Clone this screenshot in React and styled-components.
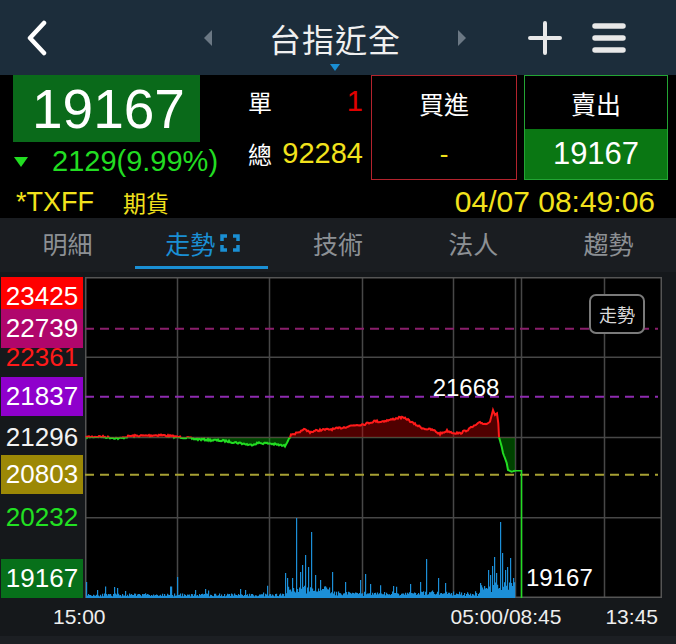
import React from 'react';
import styled, { createGlobalStyle } from 'styled-components';

const GlobalStyle = createGlobalStyle`
  html, body {
    margin: 0;
    padding: 0;
    background: #000;
  }
  body {
    font-family: 'Liberation Sans', 'Noto Sans CJK TC', sans-serif;
  }
`;

const yellow = '#f2e21c';
const green = '#22dd22';
const blue = '#1a8fd4';

const Screen = styled.div`
  width: 676px;
  height: 644px;
  overflow: hidden;
  display: flex;
  flex-direction: column;
  background: #000;
  color: #fff;
`;

/* ---------- header ---------- */

const Header = styled.header`
  position: relative;
  flex: none;
  height: 75px;
  background: #1c2d3b;
  display: grid;
  grid-template-columns: 1fr auto 1fr;
  align-items: center;
`;

const IconButton = styled.button`
  display: flex;
  align-items: center;
  justify-content: center;
  padding: 0;
  border: none;
  background: none;
  cursor: pointer;
`;

const BackButton = styled(IconButton)`
  justify-self: start;
  margin-left: 24px;
`;

const TitleGroup = styled.div`
  display: flex;
  align-items: center;
  gap: 56px;
  margin-right: 6px;
`;

const Title = styled.h1`
  margin: 0;
  font-size: 32px;
  font-weight: 400;
  color: #f0f0f0;
  letter-spacing: 1px;
`;

const HeaderActions = styled.div`
  justify-self: end;
  display: flex;
  align-items: center;
  gap: 30px;
  margin-right: 50px;
`;

const Indicator = styled.span`
  position: absolute;
  left: 330px;
  bottom: 4px;
  border-left: 5px solid transparent;
  border-right: 5px solid transparent;
  border-top: 7px solid ${blue};
`;

/* ---------- quote ---------- */

const Quote = styled.section`
  flex: none;
  height: 143px;
  display: grid;
  grid-template-columns: 187px 171px 146px 151px;
  grid-template-rows: 105px 38px;
  padding: 0 0 0 13px;
  background: #000;
`;

const PriceCol = styled.div`
  display: flex;
  flex-direction: column;
`;

const LastPrice = styled.div`
  height: 67px;
  background: #0a6a1a;
  display: flex;
  align-items: center;
  justify-content: center;
  font-size: 55px;
  color: #fff;
  padding-left: 4px;
`;

const Change = styled.div`
  flex: 1;
  display: flex;
  align-items: center;
  gap: 24px;
  padding-left: 1px;
  font-size: 29px;
  color: ${green};
`;

const DownArrow = styled.span`
  border-left: 7px solid transparent;
  border-right: 7px solid transparent;
  border-top: 10px solid ${green};
  margin-top: 2px;
`;

const InfoCol = styled.div`
  display: grid;
  grid-template-rows: 1fr 1fr;
  padding: 0 8px 0 48px;
`;

const InfoRow = styled.div`
  display: flex;
  align-items: center;
  justify-content: space-between;
`;

const InfoLabel = styled.span`
  font-size: 24px;
  color: #fff;
`;

const InfoValue = styled.span`
  font-size: 29px;
  color: ${(p) => p.$color};
`;

const OrderBox = styled.div`
  display: grid;
  grid-template-rows: 53px 1fr;
  border: 1.5px solid ${(p) => p.$border};
  margin-left: ${(p) => p.$offset || 0}px;
`;

const OrderHead = styled.div`
  display: flex;
  align-items: center;
  justify-content: center;
  font-size: 25px;
  color: #fff;
`;

const OrderValue = styled.div`
  display: flex;
  align-items: center;
  justify-content: center;
  font-size: ${(p) => (p.$dash ? 26 : 31)}px;
  color: ${(p) => (p.$dash ? yellow : '#fff')};
  background: ${(p) => p.$bg || 'transparent'};
`;

const Symbol = styled.div`
  grid-column: 1 / 3;
  display: flex;
  align-items: center;
  gap: 29px;
  padding: 6px 0 0 3px;
  color: ${yellow};
`;

const Code = styled.span`
  font-size: 27px;
`;

const Kind = styled.span`
  font-size: 23px;
`;

const Stamp = styled.div`
  grid-column: 3 / 5;
  display: flex;
  align-items: center;
  justify-content: flex-end;
  padding: 6px 13px 0 0;
  font-size: 30px;
  color: ${yellow};
`;

/* ---------- tabs ---------- */

const Tabs = styled.nav`
  flex: none;
  height: 54px;
  display: grid;
  grid-template-columns: repeat(5, 1fr);
  background: #1a1d21;
`;

const Tab = styled.div`
  position: relative;
  display: flex;
  align-items: center;
  justify-content: center;
  gap: 5px;
  padding-bottom: 4px;
  font-size: 25px;
  color: ${(p) => (p.$active ? blue : '#8c9094')};

  &::after {
    content: '';
    display: ${(p) => (p.$active ? 'block' : 'none')};
    position: absolute;
    left: 0;
    right: 2px;
    bottom: 3px;
    height: 3px;
    background: ${blue};
  }
`;

/* ---------- chart ---------- */

const ChartSection = styled.section`
  flex: 1;
  display: grid;
  grid-template-columns: 85px 577px;
  grid-template-rows: 321px 1fr;
  padding-top: 5px;
  background: #15181b;
`;

const Axis = styled.div`
  position: relative;
`;

const Level = styled.div`
  position: absolute;
  left: 1px;
  width: 82px;
  height: 39px;
  display: flex;
  align-items: center;
  justify-content: center;
  font-size: 26px;
  color: ${(p) => p.$color};
  background: ${(p) => p.$bg || 'transparent'};
`;

const Plot = styled.div`
  position: relative;
  background: #000;
`;

const ModeButton = styled.button`
  position: absolute;
  left: 504px;
  top: 17px;
  width: 56px;
  height: 40px;
  padding: 0;
  border: 2px solid #7a7a7a;
  border-radius: 7px;
  background: #000;
  color: #d8d8d8;
  font-family: 'Noto Sans CJK TC', sans-serif;
  font-size: 18px;
`;

const TimeAxis = styled.div`
  grid-column: 1 / 3;
  display: flex;
  align-items: center;
  height: 38px;
  padding-left: 53px;
  font-size: 21px;
  color: #eeeeee;
  border-bottom: 8px solid #1c1f23;
  margin-right: -14px;
  padding-right: 18px;
`;

const TimeLabel = styled.span`
  margin-left: ${(p) => (p.$auto ? 'auto' : `${p.$gap || 0}px`)};
`;

/* ---------- chart data ---------- */

const W = 577;
const H = 321;
const X0 = 85;
const Y0 = 277;
const TOP = 23425;
const RANGE = 4258;
const py = (p) => ((TOP - p) / RANGE) * H;
const BASE = py(21296);

const LEVELS = [
  { p: 23425, bg: '#ff0000', color: '#fff' },
  { p: 22361, color: '#ff1a1a' },
  { p: 22739, bg: '#b0066c', color: '#fff' },
  { p: 21837, bg: '#8f00cc', color: '#fff' },
  { p: 21296, color: '#f2f2f2' },
  { p: 20803, bg: '#9c8806', color: '#fff' },
  { p: 20232, color: '#22e022' },
  { p: 19167, bg: '#07701a', color: '#fff' },
];

const KEYS = [
  [86, 437], [100, 436.5], [110, 437.5], [120, 438.5], [130, 436], [150, 435.5],
  [160, 435], [170, 436], [177, 437], [185, 437.5], [195, 439], [210, 440],
  [225, 441], [240, 443], [250, 445], [258, 443], [270, 443.5], [285, 446],
  [289, 438], [292, 434], [300, 433], [303, 429], [310, 432], [320, 430],
  [335, 429], [345, 427], [355, 425], [365, 424], [375, 421], [380, 421.7],
  [390, 420], [400, 417.3], [407, 419], [413, 423.3], [423, 428.3], [433, 430],
  [440, 434], [447, 430.7], [453, 432.7], [460, 433.3], [467, 430], [473, 426.7],
  [480, 422.7], [487, 424], [490, 421.7], [493, 410], [495, 415], [497, 413.3],
  [498.3, 423.3], [499, 437], [501.7, 446.7], [503, 453], [506.7, 463],
  [508, 470], [511.7, 471.7], [515, 470.7],
];

const SPIKES = {
  86: 16, 97: 8, 117: 10, 125: 7, 177: 21, 195: 8, 240: 9, 245: 8,
  285: 25, 287: 20, 292: 20, 296: 80, 300: 26, 302: 33, 305: 43, 308: 31,
  311: 66, 315: 23, 320: 18, 332: 26, 345: 16, 360: 18, 365: 24, 370: 14,
  393: 12, 410: 14, 420: 16, 426: 39, 438: 20, 445: 15, 480: 15, 488: 28,
  490: 23, 492: 32, 494: 41, 496: 25, 500: 76, 502: 45, 505: 28, 507: 31,
  510: 40, 513: 20,
};

function rng(seed) {
  let s = seed;
  return () => {
    s = (s * 16807) % 2147483647;
    return (s - 1) / 2147483646;
  };
}

function buildLine() {
  const r = rng(7);
  const pts = [];
  for (let i = 0; i < KEYS.length - 1; i++) {
    const [x1, y1] = KEYS[i];
    const [x2, y2] = KEYS[i + 1];
    const steps = Math.max(1, Math.round(x2 - x1));
    for (let s = 0; s < steps; s++) {
      const t = s / steps;
      const x = x1 + (x2 - x1) * t;
      const y = y1 + (y2 - y1) * t;
      const n = x < 488 ? (r() - 0.5) * 2 : 0;
      pts.push([x - X0, y - Y0 + n]);
    }
  }
  const last = KEYS[KEYS.length - 1];
  pts.push([last[0] - X0, last[1] - Y0]);
  return pts;
}

function buildVolume() {
  const r = rng(11);
  let d = '';
  for (let x = 86; x <= 514; x++) {
    let h = 1.5 + r() * 3;
    if (x >= 285 && x <= 330) h += 2 + r() * 7;
    else if (x >= 480 && x <= 514) h += 3 + r() * 11;
    else if (x > 330 && x < 480) h += r() * 3;
    if (r() < 0.04) h += 3 + r() * 6;
    if (SPIKES[x]) h = SPIKES[x];
    d += `M${x - X0},${H}h1.2v${(-h).toFixed(1)}h-1.2z`;
  }
  return d;
}

const linePts = buildLine();
const lineD = 'M' + linePts.map(([x, y]) => `${x.toFixed(1)},${y.toFixed(1)}`).join('L');
const areaD = `${lineD}L${linePts[linePts.length - 1][0]},${BASE}L${linePts[0][0]},${BASE}Z`;
const volumeD = buildVolume();

const V_LINES = [92, 184, 277, 368, 430, 436, 519];
const H_LINES = [py(22361), BASE, py(20232)];
const DASHES = [
  { y: py(22739), c: '#8a1f6c' },
  { y: py(21837), c: '#8e2bb0' },
  { y: py(20803), c: '#a6a033' },
];

function Chart() {
  const endX = 515 - X0;
  const endY = 470.7 - Y0;
  return (
    <svg width={W} height={H} style={{ display: 'block' }}>
      <defs>
        <clipPath id="above">
          <rect x="0" y="0" width={W} height={BASE} />
        </clipPath>
        <clipPath id="below">
          <rect x="0" y={BASE} width={W} height={H - BASE} />
        </clipPath>
      </defs>
      {V_LINES.map((x) => (
        <line key={x} x1={x + 0.5} y1="0" x2={x + 0.5} y2={H} stroke="#474747" strokeWidth="1.5" />
      ))}
      {H_LINES.map((y) => (
        <line key={y} x1="0" y1={y} x2={W} y2={y} stroke="#474747" strokeWidth="1.5" />
      ))}
      <rect x="0.75" y="0.75" width={W - 1.5} height={H - 1.5} fill="none" stroke="#555" strokeWidth="1.5" />
      {DASHES.map((l) => (
        <line key={l.y} x1="0" y1={l.y} x2={W - 4} y2={l.y} stroke={l.c} strokeWidth="2" strokeDasharray="9 6" />
      ))}
      <path d={volumeD} fill="#1c8fd8" />
      <path d={areaD} fill="rgba(200,0,0,0.4)" clipPath="url(#above)" />
      <path d={areaD} fill="rgba(0,190,0,0.35)" clipPath="url(#below)" />
      <path d={lineD} fill="none" stroke="#ff1a1a" strokeWidth="2" clipPath="url(#above)" />
      <path d={lineD} fill="none" stroke={green} strokeWidth="2" clipPath="url(#below)" />
      <path d={`M${endX},${endY}H436.5V${H}`} fill="none" stroke={green} strokeWidth="1.5" />
      <text x="381" y="119" fill="#fff" fontSize="24" textAnchor="middle" fontFamily="Liberation Sans, sans-serif">
        21668
      </text>
      <text x="441" y="309" fill="#fff" fontSize="24" fontFamily="Liberation Sans, sans-serif">
        19167
      </text>
    </svg>
  );
}

/* ---------- icons ---------- */

const Chevron = () => (
  <svg width="26" height="36" viewBox="0 0 26 36">
    <path d="M20 3 L6 18 L20 33" fill="none" stroke="#fff" strokeWidth="4.5" strokeLinecap="round" strokeLinejoin="round" />
  </svg>
);

const SmallTri = ({ dir }) => (
  <svg width="10" height="16" viewBox="0 0 10 16">
    <path d={dir === 'left' ? 'M9 0 L1 8 L9 16 Z' : 'M1 0 L9 8 L1 16 Z'} fill="#6b7884" />
  </svg>
);

const Plus = () => (
  <svg width="34" height="34" viewBox="0 0 34 34">
    <path d="M17 2 V32 M2 17 H32" stroke="#e8e8e8" strokeWidth="4" strokeLinecap="round" />
  </svg>
);

const Menu = () => (
  <svg width="34" height="30" viewBox="0 0 34 30">
    <path d="M3 3 H31 M3 15 H31 M3 27 H31" stroke="#e8e8e8" strokeWidth="5.5" strokeLinecap="round" />
  </svg>
);

const Expand = () => (
  <svg width="20" height="18" viewBox="0 0 20 18">
    <path
      d="M2 7 V2 H7 M13 2 H18 V7 M18 11 V16 H13 M7 16 H2 V11"
      fill="none"
      stroke={blue}
      strokeWidth="3.5"
    />
  </svg>
);

/* ---------- page ---------- */

const TABS = ['明細', '走勢', '技術', '法人', '趨勢'];

export default function App() {
  return (
    <Screen>
      <GlobalStyle />
      <Header>
        <BackButton aria-label="back">
          <Chevron />
        </BackButton>
        <TitleGroup>
          <SmallTri dir="left" />
          <Title>台指近全</Title>
          <SmallTri dir="right" />
        </TitleGroup>
        <HeaderActions>
          <IconButton aria-label="add">
            <Plus />
          </IconButton>
          <IconButton aria-label="menu">
            <Menu />
          </IconButton>
        </HeaderActions>
        <Indicator />
      </Header>

      <Quote>
        <PriceCol>
          <LastPrice>19167</LastPrice>
          <Change>
            <DownArrow />
            <span>2129(9.99%)</span>
          </Change>
        </PriceCol>
        <InfoCol>
          <InfoRow>
            <InfoLabel>單</InfoLabel>
            <InfoValue $color="#e00000">1</InfoValue>
          </InfoRow>
          <InfoRow>
            <InfoLabel>總</InfoLabel>
            <InfoValue $color={yellow}>92284</InfoValue>
          </InfoRow>
        </InfoCol>
        <OrderBox $border="#b3232d">
          <OrderHead>買進</OrderHead>
          <OrderValue $dash>-</OrderValue>
        </OrderBox>
        <OrderBox $border="#23a534" $offset={7}>
          <OrderHead>賣出</OrderHead>
          <OrderValue $bg="#0a7713">19167</OrderValue>
        </OrderBox>
        <Symbol>
          <Code>*TXFF</Code>
          <Kind>期貨</Kind>
        </Symbol>
        <Stamp>04/07 08:49:06</Stamp>
      </Quote>

      <Tabs>
        {TABS.map((t, i) => (
          <Tab key={t} $active={i === 1}>
            {t}
            {i === 1 && <Expand />}
          </Tab>
        ))}
      </Tabs>

      <ChartSection>
        <Axis>
          {LEVELS.map((l) => {
            const top = Math.min(Math.max(py(l.p) - 19.5, 0), H - 39);
            return (
              <Level key={l.p} $bg={l.bg} $color={l.color} style={{ top }}>
                {l.p}
              </Level>
            );
          })}
        </Axis>
        <Plot>
          <Chart />
          <ModeButton>走勢</ModeButton>
        </Plot>
        <TimeAxis>
          <TimeLabel>15:00</TimeLabel>
          <TimeLabel $auto>05:00/08:45</TimeLabel>
          <TimeLabel $gap={44}>13:45</TimeLabel>
        </TimeAxis>
      </ChartSection>
    </Screen>
  );
}
